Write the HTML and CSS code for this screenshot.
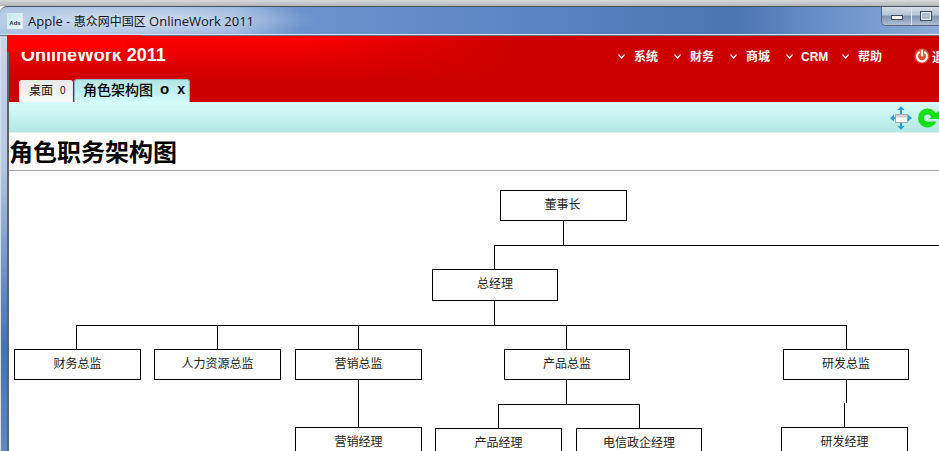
FILE: index.html
```html
<!DOCTYPE html>
<html lang="zh-CN">
<head>
<meta charset="utf-8">
<title>Apple - 惠众网中国区 OnlineWork 2011</title>
<link rel="stylesheet" href="styles.css">
</head>
<body>
<div class="desktop-strip"></div>
<div class="window">
  <div class="titlebar">
    <div class="app-icon"><span class="app-icon-text">Ads</span></div>
    <div class="title-text">Apple - <span class="title-cjk">惠众网中国区</span> OnlineWork 2011</div>
    <div class="win-buttons">
      <div class="win-btn"><span class="min-glyph"></span></div>
      <div class="win-btn"><span class="max-glyph"></span></div>
    </div>
  </div>
  <div class="client">
    <div class="frame-left"></div>
    <div class="main">
      <header class="header">
        <div class="head-row">
          <div class="logo">OnlineWork 2011</div>
          <nav class="nav">
            <a class="nav-item"><svg class="chev" viewBox="0 0 7 5"><path d="M.5.5 3.5 4 6.5.5" fill="none" stroke="#fff" stroke-width="1.2"/></svg><span>系统</span></a>
            <a class="nav-item"><svg class="chev" viewBox="0 0 7 5"><path d="M.5.5 3.5 4 6.5.5" fill="none" stroke="#fff" stroke-width="1.2"/></svg><span>财务</span></a>
            <a class="nav-item"><svg class="chev" viewBox="0 0 7 5"><path d="M.5.5 3.5 4 6.5.5" fill="none" stroke="#fff" stroke-width="1.2"/></svg><span>商城</span></a>
            <a class="nav-item"><svg class="chev" viewBox="0 0 7 5"><path d="M.5.5 3.5 4 6.5.5" fill="none" stroke="#fff" stroke-width="1.2"/></svg><span class="crm">CRM</span></a>
            <a class="nav-item"><svg class="chev" viewBox="0 0 7 5"><path d="M.5.5 3.5 4 6.5.5" fill="none" stroke="#fff" stroke-width="1.2"/></svg><span>帮助</span></a>
            <a class="nav-exit">
              <svg class="power" viewBox="0 0 16 16"><circle cx="8" cy="8" r="7.5" fill="#f08a5a" opacity=".55"/><path d="M5 4.4a5 5 0 1 0 6 0" fill="none" stroke="#fff" stroke-width="2.2" stroke-linecap="round"/><path d="M8 2.5v5" stroke="#fff" stroke-width="2.2" stroke-linecap="round"/></svg>
              <span>退出</span>
            </a>
          </nav>
        </div>
        <div class="tabs">
          <div class="tab tab-home"><span>桌面</span><span class="tab-count">0</span></div>
          <div class="tab tab-active"><span>角色架构图</span><span class="tab-o">o</span><span class="tab-x">x</span></div>
        </div>
      </header>
      <div class="toolbar">
        <svg class="tool-move" viewBox="0 0 22 24">
          <path d="M11 0 7.5 4H10v4h2V4h2.5zM11 24l-3.5-4H10v-4h2v4h2.5zM0 12l4-3.5V11h3v2H4v2.5zM22 12l-4-3.5V11h-3v2h3v2.5z" fill="#2b9fdc"/>
          <rect x="5.5" y="8.5" width="12" height="8" fill="#fff" stroke="#a9a9b4"/>
          <rect x="6" y="9" width="11" height="2.5" fill="#d8c8d0"/>
        </svg>
        <svg class="tool-refresh" viewBox="0 0 22 22">
          <circle cx="9.5" cy="11" r="6.5" fill="none" stroke="#14e014" stroke-width="6"/>
          <path d="M10 11.5h12v3H10z" fill="#c4ecea"/>
          <path d="M21 3.5v8.5H11z" fill="#14e014"/>
        </svg>
      </div>
      <h1 class="page-title">角色职务架构图</h1>
      <div class="chart">
        <svg class="chart-lines" viewBox="9 171 930 280" shape-rendering="crispEdges">
          <path fill="none" stroke="#000" stroke-width="1" d="M563.5 221V245M494 245.5H939M494.5 245V269M494.5 301V325M76 325.5H847M76.5 325V349M217.5 325V349M358.5 325V349M566.5 325V349M846.5 325V349M358.5 380V427M566.5 380V404M498 404.5H640M498.5 404V428M639.5 404V428M846.5 380V403M844.5 403V427"/>
        </svg>
        <div class="node n-ceo">董事长</div>
        <div class="node n-gm">总经理</div>
        <div class="node n-fin">财务总监</div>
        <div class="node n-hr">人力资源总监</div>
        <div class="node n-mkt">营销总监</div>
        <div class="node n-prod">产品总监</div>
        <div class="node n-rd">研发总监</div>
        <div class="node n-mktm">营销经理</div>
        <div class="node n-prodm">产品经理</div>
        <div class="node n-tel">电信政企经理</div>
        <div class="node n-rdm">研发经理</div>
      </div>
    </div>
  </div>
</div>
</body>
</html>
```

FILE: styles.css
```css
* { box-sizing: border-box; }
html, body { margin: 0; padding: 0; width: 939px; height: 451px; overflow: hidden; background: #fff; }
body { font-family: "Noto Sans CJK SC", sans-serif; color: #000; }

.desktop-strip { height: 6px; background: linear-gradient(#d6d8da, #b4b7ba); }

.window {
  width: 939px;
  height: 445px;
  border-top: 1px solid #4a4f58;
  border-top-left-radius: 7px;
  overflow: hidden;
  background: #5f88c4;
}
.titlebar {
  position: relative;
  height: 29px;
  display: flex;
  align-items: center;
  padding-left: 7px;
  border-bottom: 1px solid #6b6f75;
  box-shadow: inset 0 -1px 0 #dbe5f1;
  background:
    radial-gradient(ellipse 190px 18px at 130px 13px, rgba(255,255,255,.55), rgba(255,255,255,0)),
    linear-gradient(90deg, #a9c1e0 0, #98b5dc 25%, #6c93cd 32%, #5b85c4 55%, #4a75b2 78%, #6a90c8 88%, #8eabda 100%);
}
.app-icon {
  width: 16px;
  height: 16px;
  display: flex;
  align-items: flex-end;
  justify-content: center;
  border: 1px solid #dfe9ee;
  background: linear-gradient(135deg, #bfeaf0, #eef8fa);
}
.app-icon-text { font: bold 6px/9px "Liberation Sans", sans-serif; color: #1d2c48; }
.title-text {
  margin-left: 5px;
  font: 13px/18px "Open Sans", "Noto Sans CJK SC", sans-serif;
  color: #10141c;
  white-space: nowrap;
}
.title-cjk { font-size: 12px; }
.win-buttons {
  margin-left: auto;
  align-self: flex-start;
  height: 19px;
  display: flex;
  border: 1px solid #59677c;
  border-top: 0;
  border-right: 0;
  border-bottom-left-radius: 5px;
  overflow: hidden;
}
.win-btn {
  width: 28px;
  height: 18px;
  display: flex;
  align-items: center;
  justify-content: center;
  border-left: 1px solid #dfe6ee;
  background: linear-gradient(#d4dce8 0, #b4c3d8 45%, #7e93b2 50%, #aebed4 100%);
}
.win-btn:first-child { width: 29px; border-left: 0; }
.min-glyph { width: 12px; height: 5px; margin-top: 2px; background: #fff; border: 1px solid #3f4a5c; }
.max-glyph { width: 12px; height: 10px; border: 1px solid #3f4a5c; background: #aebed4; box-shadow: inset 0 0 0 1px #e6edf5; }

.client { display: flex; height: 416px; }
.frame-left {
  flex: 0 0 7px;
  border-left: 1px solid #d6dfec;
  background: linear-gradient(#c7d3ea 0, #b8c8e4 30%, #5f88c8 62%, #3f74ba 75%, #5f88c8 100%);
}
.main {
  flex: 0 0 932px;
  width: 932px;
  border-left: 2px solid #5d6168;
  background: #fff;
  position: relative;
}

.header {
  position: relative;
  height: 66px;
  background:
    linear-gradient(97deg, rgba(204,0,0,0) 0, rgba(204,0,0,0) 300px, #c00 500px),
    linear-gradient(#f00 0, #c00 68%);
}
.header::before {
  content: "";
  position: absolute;
  left: -2px;
  top: -1px;
  width: 118px;
  height: 17px;
  background: #f00;
  z-index: 2;
}
.header::after {
  content: "";
  position: absolute;
  left: -2px;
  top: -1px;
  width: 134px;
  height: 3px;
  background: #f00;
  z-index: 2;
}
.head-row { height: 44px; display: flex; padding-left: 12px; }
.logo {
  flex: 0 0 597px;
  padding-top: 8px;
  font: bold 18px/22px "Liberation Sans", sans-serif;
  color: #fff;
}
.nav { display: flex; flex: 0 0 auto; height: 44px; padding-top: 11px; }
.nav-item {
  width: 56px;
  height: 18px;
  display: flex;
  align-items: center;
  font-size: 12px;
  font-weight: 700;
  line-height: 18px;
  color: #fff;
}
.chev { width: 7px; height: 5px; margin-right: 9px; flex: none; }
.crm { margin-left: -1px; margin-top: 1px; font-family: "Liberation Sans", sans-serif; }
.nav-exit {
  display: flex;
  align-items: center;
  height: 18px;
  font-size: 12px;
  font-weight: 700;
  color: #fff;
  white-space: nowrap;
  padding-left: 16px;
}
.power { width: 16px; height: 16px; margin-right: 2px; flex: none; }

.tabs { display: flex; height: 22px; padding-left: 10px; align-items: flex-end; }
.tab {
  display: flex;
  align-items: center;
  border-radius: 3px 3px 0 0;
  white-space: nowrap;
  font-size: 12px;
  line-height: 18px;
}
.tab-home {
  width: 54px;
  height: 22px;
  padding-left: 9px;
  padding-bottom: 4px;
  margin-right: 1px;
  border: 1px solid #e6e6e6;
  border-bottom: 0;
  background: linear-gradient(#e9e9e9, #fafafa);
  color: #111;
}
.tab-count { margin-left: 7px; margin-top: 2px; font: 10px/18px "Liberation Sans", sans-serif; }
.tab-active {
  width: 116px;
  height: 23px;
  padding-left: 8px;
  padding-bottom: 5px;
  border: 1px solid #8fb0b8;
  border-bottom: 0;
  background: linear-gradient(#b4e4e2, #d0fbfa);
  font-size: 14px;
  font-weight: 500;
}
.tab-o { margin-left: 7px; font: bold 15px/18px "Liberation Sans", sans-serif; }
.tab-x { margin-left: 8px; font: bold 14px/18px "Liberation Sans", sans-serif; }

.toolbar {
  height: 31px;
  display: flex;
  justify-content: flex-end;
  align-items: center;
  gap: 6px;
  padding-top: 2px;
  border-bottom: 1px solid #d9efee;
  background: linear-gradient(#d6fdfa, #b4e8e3);
}
.tool-move { width: 22px; height: 24px; flex: none; }
.tool-refresh { width: 22px; height: 22px; flex: none; margin-right: -1px; }

.page-title {
  margin: 0;
  height: 38px;
  border-bottom: 1px solid #a8a8a8;
  font-size: 24px;
  font-weight: 700;
  line-height: 35px;
  color: #000;
}

.chart { position: relative; height: 280px; overflow: hidden; }
.chart-lines { position: absolute; left: 0; top: 0; width: 930px; height: 280px; }
.node {
  position: absolute;
  height: 31px;
  width: 127px;
  border: 1px solid #000;
  background: #fff;
  text-align: center;
  font-size: 12px;
  line-height: 26px;
  color: #222;
}
.n-ceo { left: 491px; top: 19px; padding-right: 2px; }
.n-gm { left: 423px; top: 98px; width: 126px; height: 32px; }
.n-fin { left: 5px; top: 178px; }
.n-hr { left: 145px; top: 178px; }
.n-mkt { left: 286px; top: 178px; }
.n-prod { left: 495px; top: 178px; width: 126px; }
.n-rd { left: 774px; top: 178px; width: 126px; }
.n-mktm { left: 286px; top: 256px; }
.n-prodm { left: 426px; top: 257px; }
.n-tel { left: 567px; top: 257px; width: 126px; }
.n-rdm { left: 772px; top: 256px; }
```
